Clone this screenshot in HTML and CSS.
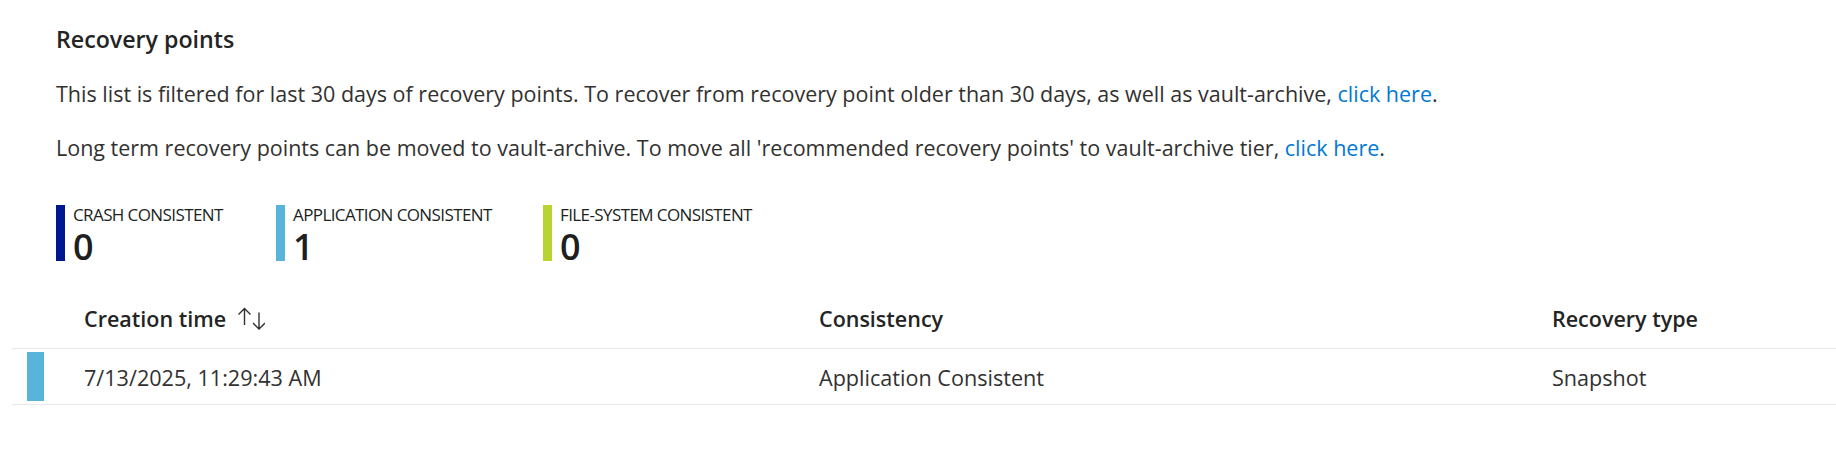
FILE: index.html
```html
<!DOCTYPE html>
<html lang="en">
<head>
<meta charset="utf-8">
<title>Recovery points</title>
<link rel="stylesheet" href="styles.css">
</head>
<body>
<main class="page">
  <section class="intro">
    <h2 class="title">Recovery points</h2>
    <p class="note">This list is filtered for last 30 days of recovery points. To recover from recovery point older than 30 days, as well as vault-archive, <a class="link" href="#">click here</a>.</p>
    <p class="note">Long term recovery points can be moved to vault-archive. To move all 'recommended recovery points' to vault-archive tier, <a class="link" href="#">click here</a>.</p>
    <div class="stats">
      <div class="stat">
        <span class="stat-bar crash"></span>
        <div class="stat-text">
          <div class="stat-label">CRASH CONSISTENT</div>
          <div class="stat-value">0</div>
        </div>
      </div>
      <div class="stat">
        <span class="stat-bar app"></span>
        <div class="stat-text">
          <div class="stat-label">APPLICATION CONSISTENT</div>
          <div class="stat-value">1</div>
        </div>
      </div>
      <div class="stat">
        <span class="stat-bar fs"></span>
        <div class="stat-text">
          <div class="stat-label">FILE-SYSTEM CONSISTENT</div>
          <div class="stat-value">0</div>
        </div>
      </div>
    </div>
  </section>
  <div class="grid">
    <div class="grid-row head">
      <div class="cell marker-cell"></div>
      <div class="cell">Creation time
        <svg class="sort" width="28" height="24" viewBox="0 0 28 24" aria-hidden="true">
          <path d="M7.5 18V1.5M1.5 7.5L7.5 1.5L13.5 7.5" fill="none" stroke="#323130" stroke-width="1.4"/>
          <path d="M22 5.5V22M16 16L22 22L28 16" fill="none" stroke="#323130" stroke-width="1.4"/>
        </svg>
      </div>
      <div class="cell">Consistency</div>
      <div class="cell">Recovery type</div>
    </div>
    <div class="grid-row body">
      <div class="cell marker-cell"><span class="row-marker app"></span></div>
      <div class="cell">7/13/2025, 11:29:43 AM</div>
      <div class="cell">Application Consistent</div>
      <div class="cell">Snapshot</div>
    </div>
  </div>
</main>
</body>
</html>
```
FILE: styles.css
```css
html, body {
  margin: 0;
  padding: 0;
  background: #ffffff;
}
body {
  font-family: "Open Sans", "Noto Sans", "Liberation Sans", sans-serif;
  color: #323130;
  width: 1836px;
  height: 457px;
  overflow: hidden;
}
.intro {
  padding-left: 56px;
}
.title {
  margin: 23px 0 0 0;
  font-size: 23.2px;
  line-height: 32px;
  font-weight: 600;
  color: #242424;
}
.note {
  margin: 25px 0 0 0;
  font-size: 21.5px;
  line-height: 28px;
}
.note + .note {
  margin-top: 26px;
}
.link {
  color: #0078d4;
  text-decoration: none;
}
.stats {
  margin-top: 43px;
  display: grid;
  grid-template-columns: 220px 267px auto;
}
.stat {
  display: flex;
  align-items: flex-start;
}
.stat-bar {
  width: 9px;
  height: 56px;
  flex: none;
}
.crash { background: #00188f; }
.app { background: #59b4d9; }
.fs { background: #b8d432; }
.stat-text {
  margin-left: 8px;
}
.stat-label {
  font-size: 17px;
  line-height: 20px;
  letter-spacing: -0.6px;
  color: #201f1e;
}
.stat-value {
  margin-top: 4px;
  font-size: 36px;
  line-height: 36px;
  font-weight: 600;
  color: #201f1e;
}
.grid {
  margin-top: 26px;
  margin-left: 12px;
}
.grid-row {
  display: grid;
  grid-template-columns: 72px 735px 733px 1fr;
  align-items: center;
  border-bottom: 1px solid #e8e8e8;
}
.head {
  height: 57px;
  font-size: 21.5px;
  font-weight: 600;
  color: #242424;
}
.head .cell {
  padding-bottom: 3px;
}
.body {
  height: 55px;
  font-size: 21.6px;
}
.cell {
  display: flex;
  align-items: center;
  white-space: nowrap;
}
.body .cell {
  padding-top: 1px;
}
.body .marker-cell {
  padding-top: 0;
  height: 100%;
  align-items: stretch;
}
.row-marker {
  margin: 3px 0 3px 15px;
  width: 17px;
}
.sort {
  margin-left: 11px;
  margin-top: 2px;
}
```
